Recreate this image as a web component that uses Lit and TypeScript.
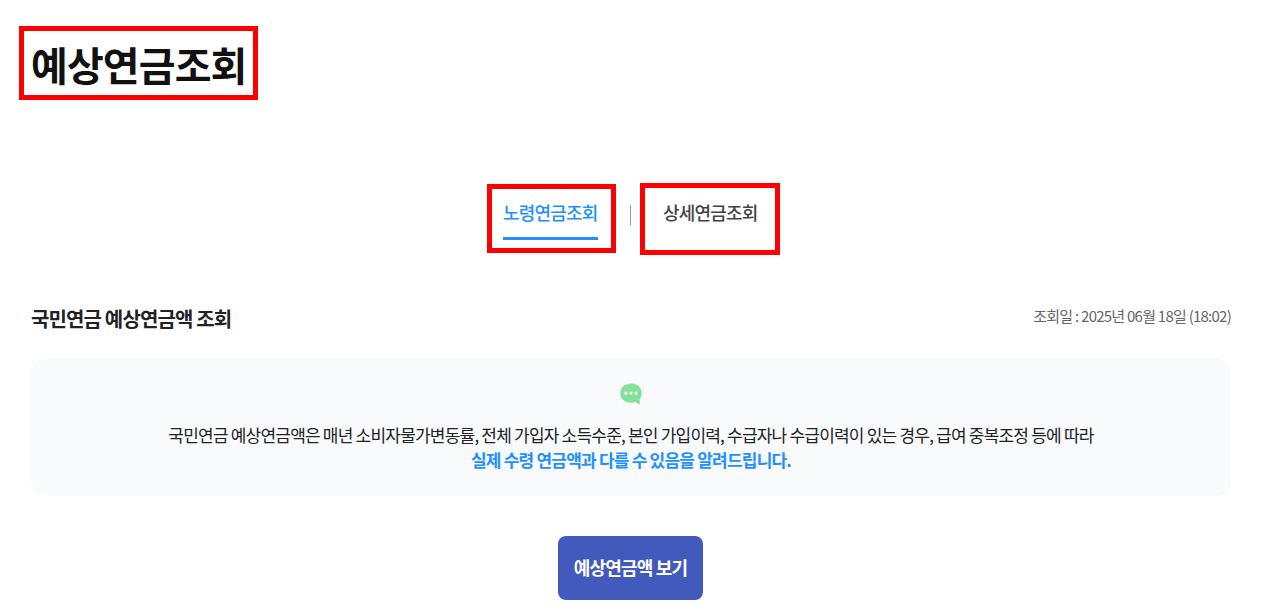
import { LitElement, html, css } from 'lit';
import { customElement, property, state } from 'lit/decorators.js';
import { classMap } from 'lit/directives/class-map.js';

@customElement('notice-box')
export class NoticeBox extends LitElement {

  static styles = [
    css`
      :host {
        display: flex;
        flex-direction: column;
        align-items: center;
        box-sizing: border-box;
        height: 138px;
        padding-top: 25px;
        border-radius: 16px;
        background: #f8fafc;
        text-align: center;
      }
      svg {
        display: block;
        width: 22px;
        height: 22px;
      }
      p {
        margin: 17px 0 0;
        font-size: 17px;
        line-height: 25px;
        letter-spacing: -0.79px;
        color: #222;
        white-space: nowrap;
      }
      strong {
        display: block;
        font-weight: 700;
        color: #1e90ff;
      }
    `
  ];

  render() {
    return html`
      <svg viewBox="0 0 22 22" aria-hidden="true">
        <path fill="#82e29b" d="M11 0.5C4.6 0.5 0.3 4.5 0.3 10.1s4.3 9.7 10.7 9.7c1.7 0 3.2-.2 4.5-.7l3.5 2.3c.4.2.7 0 .7-.4v-4.8c1.3-1.6 2-3.6 2-6.1C21.7 4.5 17.4.5 11 .5z"/>
        <path fill="#fff" d="M4.7 8.8h2.6v2.6H4.7zM9.7 8.8h2.6v2.6H9.7zM14.7 8.8h2.6v2.6h-2.6z"/>
      </svg>
      <p>
        국민연금 예상연금액은 매년 소비자물가변동률, 전체 가입자 소득수준, 본인 가입이력, 수급자나 수급이력이 있는 경우, 급여 중복조정 등에 따라
        <strong>실제 수령 연금액과 다를 수 있음을 알려드립니다.</strong>
      </p>
    `;
  }
}

@customElement('pension-tab')
export class PensionTab extends LitElement {

  /**
   * Text of the tab
   */
  @property({ type: String })
  label = ''

  /**
   * Tab is the current one
   */
  @property({ type: Boolean })
  active = false

  static styles = [
    css`
      :host {
        display: block;
      }
      .tab {
        display: flex;
        align-items: flex-start;
        width: 95px;
        height: 42px;
        padding: 0;
        border: 0;
        border-bottom: 3px solid transparent;
        box-sizing: border-box;
        background: none;
        font: inherit;
        font-size: 18px;
        font-weight: 500;
        line-height: 28px;
        letter-spacing: -0.045em;
        color: #444;
        white-space: nowrap;
      }
      .active {
        color: #1e90ff;
        border-bottom-color: #1e90ff;
      }
    `
  ];

  render() {
    return html`<button class=${classMap({ tab: true, active: this.active })}>${this.label}</button>`;
  }
}

@customElement('app-root')
export class AppRoot extends LitElement {

  @state()
  current = 0

  static styles = [
    css`
      :host {
        display: block;
        box-sizing: border-box;
        height: 616px;
        padding: 26px 30px 0 31px;
        overflow: hidden;
        background: #fff;
        font-family: 'Noto Sans CJK KR', 'Liberation Sans', sans-serif;
        color: #222;
      }
      .marked {
        box-sizing: border-box;
        border: 5px solid #f00;
      }
      h1 {
        width: 239px;
        height: 74px;
        margin: 0 0 0 -12px;
        padding: 3px 0 0 7px;
        font-size: 40px;
        font-weight: 700;
        line-height: 60px;
        letter-spacing: -0.022em;
        color: #111;
        white-space: nowrap;
      }
      .tabs {
        display: flex;
        align-items: flex-start;
        margin: 83px 0 0 456px;
      }
      .first {
        width: 129px;
        height: 69px;
        margin-top: 1px;
        padding: 9px 0 0 11px;
      }
      .second {
        width: 140px;
        height: 72px;
        padding: 10px 0 0 18px;
      }
      .divider {
        width: 1px;
        height: 20px;
        margin: 22px 9px 0 14px;
        background: #999;
      }
      .heading {
        display: flex;
        justify-content: space-between;
        align-items: flex-start;
        height: 55px;
        margin-top: 48px;
      }
      h2 {
        margin: 0;
        font-size: 20px;
        font-weight: 700;
        line-height: 32px;
        letter-spacing: -0.043em;
      }
      .date {
        font-size: 15px;
        line-height: 26px;
        letter-spacing: -0.05em;
        color: #666;
      }
      .submit {
        display: block;
        width: 145px;
        height: 64px;
        margin: 40px 0 0 527px;
        padding: 0 0 2px;
        border: 0;
        border-radius: 8px;
        background: #4259bd;
        font: inherit;
        font-size: 18px;
        font-weight: 700;
        letter-spacing: -0.045em;
        color: #fff;
      }
    `
  ];

  render() {
    return html`
      <h1 class="marked">예상연금조회</h1>
      <nav class="tabs">
        <div class="marked first" @click=${() => this.current = 0}>
          <pension-tab label="노령연금조회" ?active=${this.current === 0}></pension-tab>
        </div>
        <span class="divider"></span>
        <div class="marked second" @click=${() => this.current = 1}>
          <pension-tab label="상세연금조회" ?active=${this.current === 1}></pension-tab>
        </div>
      </nav>
      <div class="heading">
        <h2>국민연금 예상연금액 조회</h2>
        <span class="date">조회일 : 2025년 06월 18일 (18:02)</span>
      </div>
      <notice-box></notice-box>
      <button class="submit">예상연금액 보기</button>
    `;
  }
}
